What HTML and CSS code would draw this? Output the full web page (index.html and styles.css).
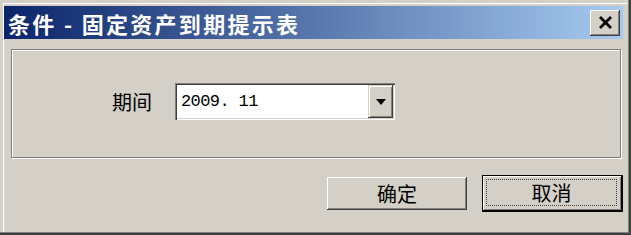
FILE: index.html
```html
<!DOCTYPE html>
<html lang="zh-CN">
<head>
<meta charset="utf-8">
<title>条件 - 固定资产到期提示表</title>
<link rel="stylesheet" href="styles.css">
</head>
<body>
<div class="window">
  <div class="titlebar">
    <span class="title">条件 - 固定资产到期提示表</span>
    <div class="close-btn">
      <svg width="15" height="13" viewBox="0 0 15 13"><path d="M2 1 L13 12 M13 1 L2 12" stroke="#000" stroke-width="2.8" fill="none"/></svg>
    </div>
  </div>
  <div class="group">
    <div class="field-row">
      <span class="label">期间</span>
      <div class="combo">
        <span class="combo-text">2009. 11</span>
        <div class="combo-btn">
          <svg width="10" height="6" viewBox="0 0 10 6"><path d="M0 0 H10 L5 6 Z" fill="#000"/></svg>
        </div>
      </div>
    </div>
  </div>
  <div class="actions">
    <div class="btn">确定</div>
    <div class="btn btn-default"><span class="focus">取消</span></div>
  </div>
</div>
</body>
</html>
```

FILE: styles.css
```css
html, body {
  margin: 0;
  padding: 0;
  background: #d4d0c8;
}

.window {
  width: 631px;
  height: 235px;
  box-sizing: border-box;
  padding: 6px 8px 0 4px;
  background: #d4d0c8;
  display: flex;
  flex-direction: column;
  font-family: "Noto Sans CJK SC", "Noto Sans", sans-serif;
  box-shadow:
    inset -1px -1px 0 #404040,
    inset -2px -2px 0 #404040,
    inset -3px -3px 0 #808080,
    inset 3px 3px 0 #d4d0c8,
    inset 4px 4px 0 #ffffff;
}

.titlebar {
  height: 33px;
  flex: none;
  display: flex;
  align-items: center;
  padding-left: 4px;
  background: linear-gradient(to right, #0a246a, #a6caf0);
}

.title {
  color: #ffffff;
  font-size: 22px;
  font-weight: bold;
  letter-spacing: 2.3px;
  line-height: 1;
  white-space: nowrap;
}

.close-btn {
  margin-left: auto;
  margin-right: 3px;
  width: 30px;
  height: 26px;
  box-sizing: border-box;
  background: #d4d0c8;
  display: flex;
  align-items: center;
  justify-content: center;
  box-shadow:
    inset -1px -1px 0 #404040,
    inset 1px 1px 0 #ffffff,
    inset -2px -2px 0 #808080;
}

.group {
  margin: 10px 2px 0 7px;
  height: 109px;
  box-sizing: border-box;
  border: 1px solid #808080;
  box-shadow: inset 1px 1px 0 #ffffff, 1px 1px 0 #ffffff;
  display: flex;
}

.field-row {
  display: flex;
  align-items: center;
  padding-left: 100px;
  padding-bottom: 4px;
  gap: 23px;
}

.label {
  font-size: 20px;
  color: #000;
  line-height: 1;
}

.combo {
  width: 220px;
  height: 37px;
  box-sizing: border-box;
  background: #ffffff;
  display: flex;
  align-items: stretch;
  padding: 2px;
  box-shadow:
    inset 1px 1px 0 #808080,
    inset 2px 2px 0 #404040,
    inset -1px -1px 0 #ffffff,
    inset -2px -2px 0 #d4d0c8;
}

.combo-text {
  flex: 1;
  display: flex;
  align-items: center;
  padding-left: 4px;
  font-family: "Liberation Mono", monospace;
  font-size: 17px;
  letter-spacing: -0.6px;
  color: #000;
}

.combo-btn {
  width: 25px;
  box-sizing: border-box;
  background: #d4d0c8;
  display: flex;
  align-items: center;
  justify-content: center;
  box-shadow:
    inset -1px -1px 0 #404040,
    inset 1px 1px 0 #d4d0c8,
    inset 2px 2px 0 #ffffff,
    inset -2px -2px 0 #808080;
}

.actions {
  display: flex;
  justify-content: flex-end;
  align-items: center;
  gap: 15px;
  margin-top: 17px;
  height: 37px;
}

.btn {
  width: 140px;
  height: 33px;
  box-sizing: border-box;
  background: #d4d0c8;
  display: flex;
  align-items: center;
  justify-content: center;
  font-size: 20px;
  color: #000;
  line-height: 1;
  box-shadow:
    inset -1px -1px 0 #404040,
    inset 1px 1px 0 #ffffff,
    inset -2px -2px 0 #808080;
}

.btn-default {
  width: 141px;
  height: 37px;
  border: 1px solid #000;
  padding: 3px 5px 5px 3px;
  box-shadow:
    inset -1px -1px 0 #000000,
    inset 1px 1px 0 #ffffff,
    inset -2px -2px 0 #808080;
}

.focus {
  flex: 1;
  align-self: stretch;
  display: flex;
  align-items: center;
  justify-content: center;
  border: 1px dotted #404040;
}
```
